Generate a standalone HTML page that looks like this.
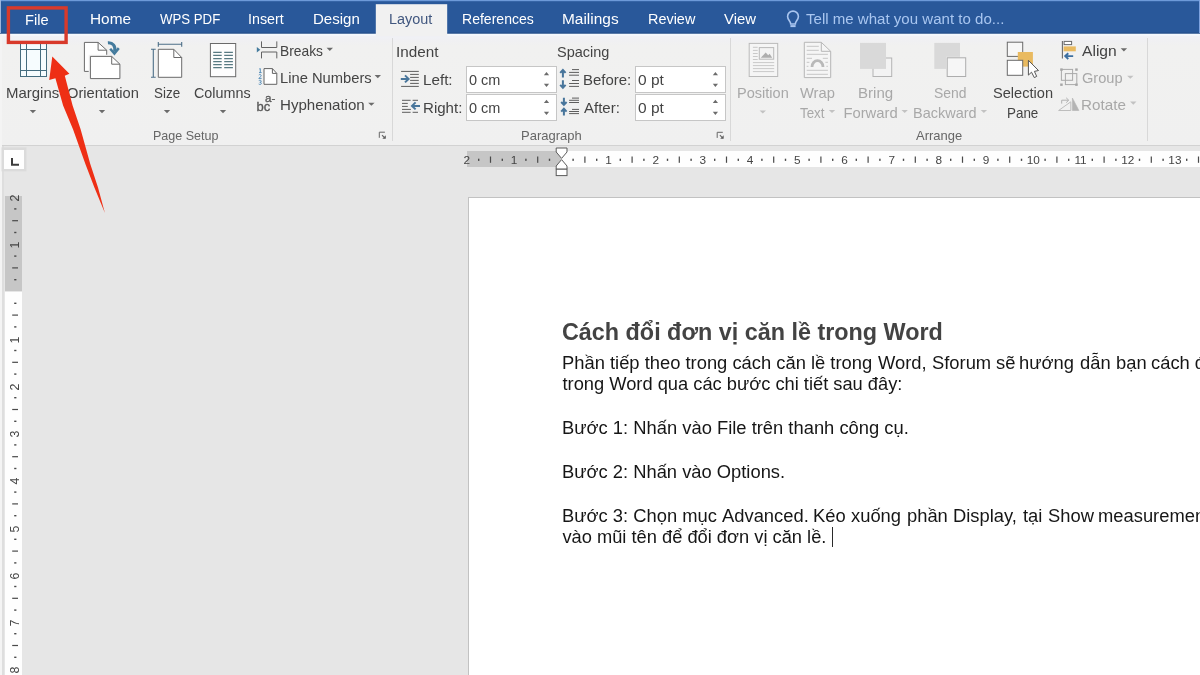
<!DOCTYPE html>
<html lang="vi">
<head>
<meta charset="utf-8">
<title>Word - Layout</title>
<style>
html,body{margin:0;padding:0;}
body{width:1200px;height:675px;overflow:hidden;position:relative;background:#e6e6e6;font-family:"Liberation Sans",sans-serif;}
#app{position:absolute;left:0;top:0;width:1200px;height:675px;overflow:hidden;}
.abs{position:absolute;}
#tabstext,#ribbontext,#doctext,#hruler,#vruler{position:absolute;left:0;top:0;will-change:transform;}
.t{position:absolute;white-space:pre;transform-origin:0 0;font-family:"Liberation Sans",sans-serif;}
.rl{position:absolute;}
.rn{position:absolute;width:20px;height:14px;line-height:14px;text-align:center;font-size:11.8px;color:#454545;font-family:"Liberation Sans",sans-serif;}
.rv{transform:rotate(-90deg);transform-origin:50% 50%;}
#tabbar{position:absolute;left:0;top:0;width:1200px;height:34px;}
#tab-active{position:absolute;left:0;top:0;}
#ribbon{position:absolute;left:0;top:33px;width:1200px;height:113px;background:linear-gradient(#f4f8fd 0,#f4f8fd 2px,#f0f1f6 3.5px,#f0f0f3 7px,#f1f1f0 13px,#f0f0f0 100%);}
#ribbon-border{position:absolute;left:0;top:145.2px;width:1200px;height:1.3px;background:#d2d2d2;}
.sep{position:absolute;top:37.5px;width:1.2px;height:103.5px;background:#d8d8d8;}
.inp{position:absolute;background:#fff;border:1px solid #c6c6c6;box-sizing:border-box;}
#docarea{position:absolute;left:0;top:146.5px;width:1200px;height:529px;background:#e6e6e6;}
#leftedge{position:absolute;left:0;top:33.5px;width:1.6px;height:642px;background:#f4f4f4;}
#leftedge-tab{position:absolute;left:0;top:0;width:1.2px;height:33.4px;background:#9db5dc;}
#rightedge-tab{position:absolute;left:1198.9px;top:0;width:1.1px;height:33.4px;background:#7da2df;}
#leftline{position:absolute;left:1.6px;top:146px;width:2.2px;height:530px;background:#dedede;}
#page{position:absolute;left:468px;top:197px;width:740px;height:480px;background:#fff;border:1px solid #c2c2c2;box-sizing:border-box;}
#caret{position:absolute;left:832px;top:527px;width:1px;height:20px;background:#2a2a2a;}
svg{position:absolute;left:0;top:0;overflow:visible;}
</style>
</head>
<body>
<div id="app">
  <div id="docarea"></div>
  <div id="leftline"></div>
  <div id="hruler">
<div class="rl" style="left:466.7px;top:151.3px;width:94.6px;height:15.4px;background:#c6c6c6"></div>
<div class="rl" style="left:561.3px;top:151.3px;width:638.7px;height:15.4px;background:#fefefe"></div>
<span class="rn" style="left:456.90px;top:152.6px">2</span>
<span class="rn" style="left:504.10px;top:152.6px">1</span>
<span class="rn" style="left:598.50px;top:152.6px">1</span>
<span class="rn" style="left:645.70px;top:152.6px">2</span>
<span class="rn" style="left:692.90px;top:152.6px">3</span>
<span class="rn" style="left:740.10px;top:152.6px">4</span>
<span class="rn" style="left:787.30px;top:152.6px">5</span>
<span class="rn" style="left:834.50px;top:152.6px">6</span>
<span class="rn" style="left:881.70px;top:152.6px">7</span>
<span class="rn" style="left:928.90px;top:152.6px">8</span>
<span class="rn" style="left:976.10px;top:152.6px">9</span>
<span class="rn" style="left:1023.30px;top:152.6px">10</span>
<span class="rn" style="left:1070.50px;top:152.6px">11</span>
<span class="rn" style="left:1117.70px;top:152.6px">12</span>
<span class="rn" style="left:1164.90px;top:152.6px">13</span>
<svg width="1200" height="675" viewBox="0 0 1200 675"><g fill="#4a4a4a"><rect x="478.00" y="158.7" width="1.4" height="2.2"/><rect x="489.90" y="156.5" width="1.2" height="6.3"/><rect x="501.60" y="158.7" width="1.4" height="2.2"/><rect x="525.20" y="158.7" width="1.4" height="2.2"/><rect x="537.10" y="156.5" width="1.2" height="6.3"/><rect x="548.80" y="158.7" width="1.4" height="2.2"/><rect x="572.40" y="158.7" width="1.4" height="2.2"/><rect x="584.30" y="156.5" width="1.2" height="6.3"/><rect x="596.00" y="158.7" width="1.4" height="2.2"/><rect x="619.60" y="158.7" width="1.4" height="2.2"/><rect x="631.50" y="156.5" width="1.2" height="6.3"/><rect x="643.20" y="158.7" width="1.4" height="2.2"/><rect x="666.80" y="158.7" width="1.4" height="2.2"/><rect x="678.70" y="156.5" width="1.2" height="6.3"/><rect x="690.40" y="158.7" width="1.4" height="2.2"/><rect x="714.00" y="158.7" width="1.4" height="2.2"/><rect x="725.90" y="156.5" width="1.2" height="6.3"/><rect x="737.60" y="158.7" width="1.4" height="2.2"/><rect x="761.20" y="158.7" width="1.4" height="2.2"/><rect x="773.10" y="156.5" width="1.2" height="6.3"/><rect x="784.80" y="158.7" width="1.4" height="2.2"/><rect x="808.40" y="158.7" width="1.4" height="2.2"/><rect x="820.30" y="156.5" width="1.2" height="6.3"/><rect x="832.00" y="158.7" width="1.4" height="2.2"/><rect x="855.60" y="158.7" width="1.4" height="2.2"/><rect x="867.50" y="156.5" width="1.2" height="6.3"/><rect x="879.20" y="158.7" width="1.4" height="2.2"/><rect x="902.80" y="158.7" width="1.4" height="2.2"/><rect x="914.70" y="156.5" width="1.2" height="6.3"/><rect x="926.40" y="158.7" width="1.4" height="2.2"/><rect x="950.00" y="158.7" width="1.4" height="2.2"/><rect x="961.90" y="156.5" width="1.2" height="6.3"/><rect x="973.60" y="158.7" width="1.4" height="2.2"/><rect x="997.20" y="158.7" width="1.4" height="2.2"/><rect x="1009.10" y="156.5" width="1.2" height="6.3"/><rect x="1020.80" y="158.7" width="1.4" height="2.2"/><rect x="1044.40" y="158.7" width="1.4" height="2.2"/><rect x="1056.30" y="156.5" width="1.2" height="6.3"/><rect x="1068.00" y="158.7" width="1.4" height="2.2"/><rect x="1091.60" y="158.7" width="1.4" height="2.2"/><rect x="1103.50" y="156.5" width="1.2" height="6.3"/><rect x="1115.20" y="158.7" width="1.4" height="2.2"/><rect x="1138.80" y="158.7" width="1.4" height="2.2"/><rect x="1150.70" y="156.5" width="1.2" height="6.3"/><rect x="1162.40" y="158.7" width="1.4" height="2.2"/><rect x="1186.00" y="158.7" width="1.4" height="2.2"/><rect x="1197.90" y="156.5" width="1.2" height="6.3"/></g></svg>
  </div>
  <div id="vruler">
<div class="rl" style="left:5px;top:195.7px;width:16.9px;height:95.8px;background:#c6c6c6"></div>
<div class="rl" style="left:5px;top:291.5px;width:16.9px;height:383.5px;background:#fefefe"></div>
<span class="rn rv" style="left:4.9px;top:191.10px;font-size:12.4px">2</span>
<span class="rn rv" style="left:4.9px;top:238.30px;font-size:12.4px">1</span>
<span class="rn rv" style="left:4.9px;top:332.70px;font-size:12.4px">1</span>
<span class="rn rv" style="left:4.9px;top:379.90px;font-size:12.4px">2</span>
<span class="rn rv" style="left:4.9px;top:427.10px;font-size:12.4px">3</span>
<span class="rn rv" style="left:4.9px;top:474.30px;font-size:12.4px">4</span>
<span class="rn rv" style="left:4.9px;top:521.50px;font-size:12.4px">5</span>
<span class="rn rv" style="left:4.9px;top:568.70px;font-size:12.4px">6</span>
<span class="rn rv" style="left:4.9px;top:615.90px;font-size:12.4px">7</span>
<span class="rn rv" style="left:4.9px;top:663.10px;font-size:12.4px">8</span>
<svg width="1200" height="675" viewBox="0 0 1200 675"><g fill="#4a4a4a"><rect x="14.2" y="208.20" width="2.2" height="1.4"/><rect x="12.2" y="220.10" width="5.8" height="1.2"/><rect x="14.2" y="231.80" width="2.2" height="1.4"/><rect x="14.2" y="255.40" width="2.2" height="1.4"/><rect x="12.2" y="267.30" width="5.8" height="1.2"/><rect x="14.2" y="279.00" width="2.2" height="1.4"/><rect x="14.2" y="302.60" width="2.2" height="1.4"/><rect x="12.2" y="314.50" width="5.8" height="1.2"/><rect x="14.2" y="326.20" width="2.2" height="1.4"/><rect x="14.2" y="349.80" width="2.2" height="1.4"/><rect x="12.2" y="361.70" width="5.8" height="1.2"/><rect x="14.2" y="373.40" width="2.2" height="1.4"/><rect x="14.2" y="397.00" width="2.2" height="1.4"/><rect x="12.2" y="408.90" width="5.8" height="1.2"/><rect x="14.2" y="420.60" width="2.2" height="1.4"/><rect x="14.2" y="444.20" width="2.2" height="1.4"/><rect x="12.2" y="456.10" width="5.8" height="1.2"/><rect x="14.2" y="467.80" width="2.2" height="1.4"/><rect x="14.2" y="491.40" width="2.2" height="1.4"/><rect x="12.2" y="503.30" width="5.8" height="1.2"/><rect x="14.2" y="515.00" width="2.2" height="1.4"/><rect x="14.2" y="538.60" width="2.2" height="1.4"/><rect x="12.2" y="550.50" width="5.8" height="1.2"/><rect x="14.2" y="562.20" width="2.2" height="1.4"/><rect x="14.2" y="585.80" width="2.2" height="1.4"/><rect x="12.2" y="597.70" width="5.8" height="1.2"/><rect x="14.2" y="609.40" width="2.2" height="1.4"/><rect x="14.2" y="633.00" width="2.2" height="1.4"/><rect x="12.2" y="644.90" width="5.8" height="1.2"/><rect x="14.2" y="656.60" width="2.2" height="1.4"/><rect x="14.2" y="680.20" width="2.2" height="1.4"/></g></svg>
  </div>
  <div id="page"></div>
  <div id="doctext">
<span class="t" style="left:562.40px;top:321.00px;font-size:23.3px;line-height:23.3px;color:#434343;transform:scaleX(1.0026);font-weight:bold;">Cách đổi đơn vị căn lề trong Word</span>
<span class="t" style="left:562.00px;top:354.00px;font-size:18.3px;line-height:18.3px;color:#161616;transform:scaleX(1.0040);">Phần tiếp theo trong cách căn lề trong</span>
<span class="t" style="left:877.50px;top:354.00px;font-size:18.3px;line-height:18.3px;color:#161616;transform:scaleX(1.0040);">Word,</span>
<span class="t" style="left:931.70px;top:354.00px;font-size:18.3px;line-height:18.3px;color:#161616;transform:scaleX(1.0040);">Sforum</span>
<span class="t" style="left:995.80px;top:354.00px;font-size:18.3px;line-height:18.3px;color:#161616;transform:scaleX(1.0040);">sẽ</span>
<span class="t" style="left:1019.00px;top:354.00px;font-size:18.3px;line-height:18.3px;color:#161616;transform:scaleX(1.0040);">hướng</span>
<span class="t" style="left:1080.00px;top:354.00px;font-size:18.3px;line-height:18.3px;color:#161616;transform:scaleX(1.0040);">dẫn</span>
<span class="t" style="left:1115.70px;top:354.00px;font-size:18.3px;line-height:18.3px;color:#161616;transform:scaleX(1.0040);">bạn</span>
<span class="t" style="left:1150.80px;top:354.00px;font-size:18.3px;line-height:18.3px;color:#161616;transform:scaleX(1.0040);">cách đổi đơn vị</span>
<span class="t" style="left:562.50px;top:375.00px;font-size:18.3px;line-height:18.3px;color:#161616;">trong Word qua các bước chi tiết sau đây:</span>
<span class="t" style="left:561.80px;top:419.00px;font-size:18.3px;line-height:18.3px;color:#161616;transform:scaleX(1.0042);">Bước 1: Nhấn vào File trên thanh công cụ.</span>
<span class="t" style="left:561.50px;top:463.00px;font-size:18.3px;line-height:18.3px;color:#161616;transform:scaleX(1.0032);">Bước 2: Nhấn vào Options.</span>
<span class="t" style="left:561.60px;top:507.00px;font-size:18.3px;line-height:18.3px;color:#161616;transform:scaleX(1.0040);">Bước 3: Chọn mục</span>
<span class="t" style="left:722.00px;top:507.00px;font-size:18.3px;line-height:18.3px;color:#161616;transform:scaleX(1.0040);">Advanced.</span>
<span class="t" style="left:813.20px;top:507.00px;font-size:18.3px;line-height:18.3px;color:#161616;transform:scaleX(1.0040);">Kéo</span>
<span class="t" style="left:850.80px;top:507.00px;font-size:18.3px;line-height:18.3px;color:#161616;transform:scaleX(1.0040);">xuống</span>
<span class="t" style="left:906.50px;top:507.00px;font-size:18.3px;line-height:18.3px;color:#161616;transform:scaleX(1.0040);">phần</span>
<span class="t" style="left:953.00px;top:507.00px;font-size:18.3px;line-height:18.3px;color:#161616;transform:scaleX(1.0040);">Display,</span>
<span class="t" style="left:1023.20px;top:507.00px;font-size:18.3px;line-height:18.3px;color:#161616;transform:scaleX(1.0040);">tại</span>
<span class="t" style="left:1048.30px;top:507.00px;font-size:18.3px;line-height:18.3px;color:#161616;transform:scaleX(1.0040);">Show</span>
<span class="t" style="left:1098.30px;top:507.00px;font-size:18.3px;line-height:18.3px;color:#161616;transform:scaleX(1.0040);">measurement units in, nhấn</span>
<span class="t" style="left:562.40px;top:528.00px;font-size:18.3px;line-height:18.3px;color:#161616;">vào mũi tên để đổi đơn vị căn lề.</span>
  </div>
  <div id="caret"></div>
  <div id="ribbon"></div>
  <div id="ribbon-border"></div>
  <div class="sep" style="left:392px"></div>
  <div class="sep" style="left:730px"></div>
  <div class="sep" style="left:1147.2px"></div>
  <div class="inp" style="left:466px;top:66px;width:91px;height:27px"></div>
  <div class="inp" style="left:466px;top:94px;width:91px;height:27px"></div>
  <div class="inp" style="left:635px;top:66px;width:91px;height:27px"></div>
  <div class="inp" style="left:635px;top:94px;width:91px;height:27px"></div>
  <div id="tabbar"><svg width="1200" height="34" viewBox="0 0 1200 34"><rect x="0" y="0" width="1200" height="33.5" fill="#29589a"/><rect x="0" y="32.6" width="1200" height="0.9" fill="#244c86"/><rect x="0" y="0" width="1200" height="1.2" fill="#6d9ad9"/></svg></div>
  <svg id="tab-active" width="1200" height="40" viewBox="0 0 1200 40"><rect x="375.8" y="4.2" width="71.4" height="32" fill="#f1f1f1"/></svg>
  <div id="leftedge"></div>
  <div id="leftedge-tab"></div>
  <div id="rightedge-tab"></div>
  <div id="tabstext">
<span class="t" style="left:24.94px;top:12.00px;font-size:15.2px;line-height:15.2px;color:#ffffff;transform:scaleX(0.9641);">File</span>
<span class="t" style="left:89.79px;top:11.00px;font-size:15.2px;line-height:15.2px;color:#ffffff;transform:scaleX(1.0137);">Home</span>
<span class="t" style="left:160.00px;top:11.00px;font-size:15.2px;line-height:15.2px;color:#ffffff;transform:scaleX(0.8707);">WPS PDF</span>
<span class="t" style="left:248.36px;top:11.00px;font-size:15.2px;line-height:15.2px;color:#ffffff;transform:scaleX(0.9400);">Insert</span>
<span class="t" style="left:313.11px;top:11.00px;font-size:15.2px;line-height:15.2px;color:#ffffff;transform:scaleX(0.9906);">Design</span>
<span class="t" style="left:388.75px;top:11.00px;font-size:15.2px;line-height:15.2px;color:#41577f;transform:scaleX(0.9498);">Layout</span>
<span class="t" style="left:461.57px;top:11.00px;font-size:15.2px;line-height:15.2px;color:#ffffff;transform:scaleX(0.9251);">References</span>
<span class="t" style="left:561.98px;top:11.00px;font-size:15.2px;line-height:15.2px;color:#ffffff;transform:scaleX(1.0161);">Mailings</span>
<span class="t" style="left:647.65px;top:11.00px;font-size:15.2px;line-height:15.2px;color:#ffffff;transform:scaleX(0.9503);">Review</span>
<span class="t" style="left:724.00px;top:11.00px;font-size:15.2px;line-height:15.2px;color:#ffffff;transform:scaleX(0.9793);">View</span>
<span class="t" style="left:806.20px;top:11.00px;font-size:15.2px;line-height:15.2px;color:#a9c6f0;transform:scaleX(0.9912);">Tell me what you want to do...</span>
  </div>
  <div id="ribbontext">
<span class="t" style="left:5.69px;top:86.00px;font-size:14.8px;line-height:14.8px;color:#444444;transform:scaleX(1.0112);">Margins</span>
<span class="t" style="left:67.40px;top:86.00px;font-size:14.8px;line-height:14.8px;color:#444444;transform:scaleX(0.9924);">Orientation</span>
<span class="t" style="left:153.70px;top:86.00px;font-size:14.8px;line-height:14.8px;color:#444444;transform:scaleX(0.9070);">Size</span>
<span class="t" style="left:194.40px;top:86.00px;font-size:14.8px;line-height:14.8px;color:#444444;transform:scaleX(0.9709);">Columns</span>
<span class="t" style="left:279.77px;top:44.00px;font-size:14.8px;line-height:14.8px;color:#444444;transform:scaleX(0.9338);">Breaks</span>
<span class="t" style="left:279.70px;top:71.00px;font-size:14.8px;line-height:14.8px;color:#444444;transform:scaleX(0.9954);">Line Numbers</span>
<span class="t" style="left:279.68px;top:98.00px;font-size:14.8px;line-height:14.8px;color:#444444;transform:scaleX(1.0201);">Hyphenation</span>
<span class="t" style="left:152.80px;top:130.00px;font-size:12.6px;line-height:12.6px;color:#666666;transform:scaleX(0.9951);">Page Setup</span>
<span class="t" style="left:396.27px;top:45.00px;font-size:14.8px;line-height:14.8px;color:#444444;transform:scaleX(1.0318);">Indent</span>
<span class="t" style="left:422.67px;top:73.00px;font-size:14.8px;line-height:14.8px;color:#444444;transform:scaleX(1.0270);">Left:</span>
<span class="t" style="left:422.68px;top:101.00px;font-size:14.8px;line-height:14.8px;color:#444444;transform:scaleX(1.0180);">Right:</span>
<span class="t" style="left:469.40px;top:73.00px;font-size:14.8px;line-height:14.8px;color:#444444;transform:scaleX(0.9799);">0 cm</span>
<span class="t" style="left:469.40px;top:101.00px;font-size:14.8px;line-height:14.8px;color:#444444;transform:scaleX(0.9799);">0 cm</span>
<span class="t" style="left:557.30px;top:45.00px;font-size:14.8px;line-height:14.8px;color:#444444;transform:scaleX(0.9804);">Spacing</span>
<span class="t" style="left:582.69px;top:73.00px;font-size:14.8px;line-height:14.8px;color:#444444;transform:scaleX(1.0111);">Before:</span>
<span class="t" style="left:583.70px;top:101.00px;font-size:14.8px;line-height:14.8px;color:#444444;transform:scaleX(1.0132);">After:</span>
<span class="t" style="left:638.30px;top:73.00px;font-size:14.8px;line-height:14.8px;color:#444444;transform:scaleX(1.0460);">0 pt</span>
<span class="t" style="left:638.30px;top:101.00px;font-size:14.8px;line-height:14.8px;color:#444444;transform:scaleX(1.0460);">0 pt</span>
<span class="t" style="left:520.67px;top:130.00px;font-size:12.6px;line-height:12.6px;color:#666666;transform:scaleX(1.0310);">Paragraph</span>
<span class="t" style="left:736.72px;top:86.00px;font-size:14.8px;line-height:14.8px;color:#a8a8a8;transform:scaleX(0.9823);">Position</span>
<span class="t" style="left:799.60px;top:86.00px;font-size:14.8px;line-height:14.8px;color:#a8a8a8;transform:scaleX(0.9927);">Wrap</span>
<span class="t" style="left:799.60px;top:106.00px;font-size:14.8px;line-height:14.8px;color:#a8a8a8;transform:scaleX(0.9028);">Text</span>
<span class="t" style="left:858.38px;top:86.00px;font-size:14.8px;line-height:14.8px;color:#a8a8a8;transform:scaleX(1.0176);">Bring</span>
<span class="t" style="left:843.40px;top:106.00px;font-size:14.8px;line-height:14.8px;color:#a8a8a8;">Forward</span>
<span class="t" style="left:934.20px;top:86.00px;font-size:14.8px;line-height:14.8px;color:#a8a8a8;transform:scaleX(0.9409);">Send</span>
<span class="t" style="left:912.92px;top:106.00px;font-size:14.8px;line-height:14.8px;color:#a8a8a8;transform:scaleX(0.9790);">Backward</span>
<span class="t" style="left:992.60px;top:86.00px;font-size:14.8px;line-height:14.8px;color:#444444;transform:scaleX(0.9861);">Selection</span>
<span class="t" style="left:1006.59px;top:106.00px;font-size:14.8px;line-height:14.8px;color:#444444;transform:scaleX(0.9061);">Pane</span>
<span class="t" style="left:1082.30px;top:44.00px;font-size:14.8px;line-height:14.8px;color:#444444;transform:scaleX(1.0559);">Align</span>
<span class="t" style="left:1082.30px;top:71.00px;font-size:14.8px;line-height:14.8px;color:#a8a8a8;transform:scaleX(0.9879);">Group</span>
<span class="t" style="left:1081.27px;top:98.00px;font-size:14.8px;line-height:14.8px;color:#a8a8a8;transform:scaleX(1.0291);">Rotate</span>
<span class="t" style="left:915.50px;top:130.00px;font-size:12.6px;line-height:12.6px;color:#666666;transform:scaleX(1.0290);">Arrange</span>
  </div>
<svg id="icons" width="1200" height="675" viewBox="0 0 1200 675">
<defs>
  <path id="dd" d="M-3.2,-0.9 L3.2,-0.9 L0,2.2 Z"/>
  <path id="up" d="M-2.6,1.5 L2.6,1.5 L0,-1.7 Z"/>
  <path id="dn" d="M-2.6,-1.5 L2.6,-1.5 L0,1.7 Z"/>
  <g id="launch"><path d="M0,5.6 V0 H5.6" fill="none" stroke="#666" stroke-width="1"/><path d="M2.7,2.9 L5.6,5.8" fill="none" stroke="#666" stroke-width="1.1"/><path d="M6.5,3 V6.5 H3 Z" fill="#5e5e5e"/></g>
</defs>
<!-- dropdown arrows -->
<g fill="#6b6b6b">
  <use href="#dd" x="32.9" y="111"/><use href="#dd" x="102" y="111"/><use href="#dd" x="167" y="111"/><use href="#dd" x="223" y="111"/>
  <use href="#dd" x="329.8" y="48.7"/><use href="#dd" x="377.8" y="76"/><use href="#dd" x="371.4" y="103.6"/>
  <use href="#dd" x="1123.9" y="49.2"/>
</g>
<g fill="#c2c2c2">
  <use href="#dd" x="762.8" y="111.3"/><use href="#dd" x="832" y="110.8"/><use href="#dd" x="904.7" y="110.8"/><use href="#dd" x="983.9" y="110.8"/>
  <use href="#dd" x="1130.3" y="76.6"/><use href="#dd" x="1133.3" y="102.5"/>
</g>
<!-- spinners -->
<g fill="#6b6b6b">
  <use href="#up" x="546.5" y="73.8"/><use href="#dn" x="546.5" y="85.2"/>
  <use href="#up" x="546.5" y="101.5"/><use href="#dn" x="546.5" y="113.2"/>
  <use href="#up" x="715.4" y="73.8"/><use href="#dn" x="715.4" y="85.2"/>
  <use href="#up" x="715.4" y="101.5"/><use href="#dn" x="715.4" y="113.2"/>
</g>
<use href="#launch" x="379.3" y="132.2"/>
<use href="#launch" x="717.2" y="132.3"/>

<!-- Margins -->
<g id="ic-margins" stroke="#456c7e" stroke-width="1" fill="none">
  <rect x="20.5" y="42.5" width="26" height="34" fill="#f6fcfe"/>
  <path d="M26.5,42.5 V76.5 M40.5,42.5 V76.5 M20.5,49.5 H46.5 M20.5,70.5 H46.5"/>
</g>
<!-- Orientation -->
<g id="ic-orient" stroke="#6a6a6a" stroke-width="1" fill="#fff">
  <path d="M84.4,42.4 H98.1 L106.7,50.2 V71.4 H84.4 Z"/>
  <path d="M98.1,42.4 V50.2 H106.7" fill="none"/>
  <path d="M90.4,56.4 H111.7 L119.9,64.2 V78.6 H90.4 Z" stroke="#f1f1f1" stroke-width="3.4"/>
  <path d="M90.4,56.4 H111.7 L119.9,64.2 V78.6 H90.4 Z"/>
  <path d="M111.7,56.4 V64.2 H119.9" fill="none"/>
  <path d="M107.9,42.8 C112.8,42.4 115.6,45.8 114.8,51.6" fill="none" stroke="#447b9d" stroke-width="3.2"/>
  <path d="M110.2,48.7 L114.4,53.6 L118.8,48.1" fill="none" stroke="#447b9d" stroke-width="2.5"/>
</g>
<!-- Size -->
<g id="ic-size" stroke="#6a6a6a" stroke-width="1" fill="#fff">
  <path d="M158.3,49.3 H173.8 L181.7,57.5 V77.3 H158.3 Z"/>
  <path d="M173.8,49.3 V57.5 H181.7" fill="none"/>
  <path d="M158.3,44.3 H181.7 M158.3,42 V46.7 M181.7,42 V46.7 M153.3,49.3 V77.3 M151,49.3 H155.7 M151,77.3 H155.7" stroke="#4d6f88" stroke-width="1.1" fill="none"/>
</g>
<!-- Columns -->
<g id="ic-cols" stroke="#6a6a6a" stroke-width="1" fill="#fdfdfd">
  <rect x="210.4" y="43.5" width="25.3" height="33.2"/>
  <path d="M213.2,52.4 H221.7 M224.2,52.4 H232.9 M213.2,55.4 H221.7 M224.2,55.4 H232.9 M213.2,58.5 H221.7 M224.2,58.5 H232.9 M213.2,61.5 H221.7 M224.2,61.5 H232.9 M213.2,64.5 H221.7 M224.2,64.5 H232.9 M213.2,67.5 H221.7 M224.2,67.5 H232.9" stroke="#587a82" stroke-width="1.25"/>
</g>
<!-- Breaks -->
<g id="ic-breaks" stroke="#636363" stroke-width="1" fill="none">
  <path d="M261.5,41.4 V47.5 H276.8 V41.4"/>
  <path d="M261.5,58.4 V52 H276.8 V58.4"/>
  <path d="M256.8,47 L260.3,49.7 L256.8,52.4 Z" fill="#447b9d" stroke="none"/>
</g>
<!-- Line numbers -->
<g id="ic-linenum" stroke="#636363" stroke-width="1" fill="#fff">
  <path d="M264,68.6 H272.4 L276.8,73.4 V84.3 H264 Z"/>
  <path d="M272.4,68.6 V73.4 H276.8" fill="none"/>
  <g stroke="#4a86b4" stroke-width="0.9" fill="none">
    <path d="M259.2,69 L260.3,68.6 V72.6 M259,72.6 H261.6"/>
    <path d="M258.8,75 C259.6,74.2 261.4,74.4 261.2,75.8 C261,76.8 259.4,77.4 258.8,78.4 H261.6"/>
    <path d="M258.8,80.6 C259.8,80 261.4,80.2 261.2,81.4 C261.1,82.1 260.4,82.3 259.8,82.3 C260.6,82.3 261.5,82.6 261.4,83.5 C261.2,84.6 259.4,84.6 258.7,84"/>
  </g>
</g>
<!-- Hyphenation -->
<g id="ic-hyph" font-family="Liberation Sans, sans-serif" fill="#585858" stroke="#585858" stroke-width="0.35">
  <text x="256.6" y="111.3" font-size="13">bc</text>
  <text x="265" y="102" font-size="11.6">a-</text>
</g>

<!-- Indent left icon -->
<g id="ic-indl" stroke="#5d5d5d" stroke-width="1" fill="none">
  <path d="M401.1,71.4 H418.8 M410.1,74.4 H418.8 M410.1,77.4 H418.8 M410.1,80.4 H418.8 M410.1,83.4 H418.8 M401.1,86.4 H418.8"/>
  <path d="M400.8,78.9 H408 M405,75.4 L408.6,78.9 L405,82.4" stroke="#48759b" stroke-width="2"/>
</g>
<g id="ic-indr" stroke="#5d5d5d" stroke-width="1" fill="none">
  <path d="M402,100.3 H410.6 M412.6,100.3 H418 M402,103.4 H407.8 M402,106.4 H407.8 M402,109.4 H410.9 M402,112.3 H410.6 M412.6,112.3 H418" />
  <path d="M420,105.9 H412.6 M415.6,102.4 L412,105.9 L415.6,109.4" stroke="#48759b" stroke-width="2"/>
</g>
<!-- Spacing before -->
<g id="ic-spb" stroke="#5d5d5d" stroke-width="1" fill="none">
  <path d="M572,69.6 H579 M569.1,72.4 H579 M569.1,75.2 H579 M572,80.5 H579 M569.1,83.5 H579 M569.1,86.4 H579"/>
  <path d="M562.9,70.2 V77.4 M560.2,72.9 L562.9,70 L565.6,72.9 M562.9,80.2 V87.6 M560.2,84.9 L562.9,87.8 L565.6,84.9" stroke="#48759b" stroke-width="2"/>
</g>
<g id="ic-spa" stroke="#5d5d5d" stroke-width="1" fill="none">
  <path d="M572,98.1 H579 M569.1,100.3 H579 M569.1,102.5 H579 M572,109.4 H579 M569.1,111.5 H579 M569.1,113.6 H579"/>
  <path d="M563.9,97.8 V104.6 M561.2,102 L563.9,104.9 L566.6,102 M563.9,115.6 V109 M561.2,111.6 L563.9,108.7 L566.6,111.6" stroke="#48759b" stroke-width="2"/>
</g>

<!-- Position -->
<g id="ic-pos" stroke="#bababa" stroke-width="1" fill="none">
  <rect x="749.2" y="43.4" width="28.5" height="33.1" fill="#f5f5f5"/>
  <rect x="759.3" y="47.6" width="14.4" height="11.6" fill="#f3f3f3"/>
  <path d="M760.8,57.8 L765.7,52.4 L768.2,55.2 L769.6,53.8 L772.2,57.8 Z" fill="#adadad" stroke="none"/>
  <path d="M752.9,47.3 H757.7 M752.9,50.4 H757.7 M752.9,53.5 H757.7 M752.9,56.5 H757.7 M752.9,59.5 H757.7 M752.9,62.6 H774.2 M752.9,65.6 H774.2 M752.9,68.6 H774.2 M752.9,71.6 H774.2" stroke="#c9c9c9"/>
</g>
<!-- Wrap text -->
<g id="ic-wrap" stroke="#b6b6b6" stroke-width="1" fill="none">
  <path d="M804.3,42.3 H821.3 L830.7,51.3 V77.6 H804.3 Z" fill="#f5f5f5"/>
  <path d="M821.3,42.3 V51.3 H830.7"/>
  <path d="M806.7,46.3 H818.8 M806.7,50.3 H818.8 M806.7,54.3 H827.9 M806.7,58.3 H812 M822.8,58.3 H827.9 M806.7,62.3 H809.4 M825.4,62.3 H827.9 M806.7,66.3 H808.4 M826.4,66.3 H827.9 M806.7,70.3 H827.9 M806.7,74.3 H827.9" stroke="#c6c6c6"/>
  <path d="M812,66.9 A5.5,6.2 0 0 1 823,66.9" stroke="#b9b9b9" stroke-width="2.8"/>
</g>
<!-- Bring forward -->
<g id="ic-bring">
  <rect x="873" y="58" width="18.7" height="18.5" fill="#f3f3f3" stroke="#b4b4b4"/>
  <rect x="860" y="42.9" width="26" height="26" fill="#d9d9d9"/>
</g>
<!-- Send backward -->
<g id="ic-send">
  <rect x="934.3" y="42.9" width="25.7" height="26" fill="#d9d9d9"/>
  <rect x="946.2" y="56.8" width="20.5" height="20.7" fill="#f0f0f0"/><rect x="947.2" y="57.8" width="18.5" height="18.7" fill="#f6f6f6" stroke="#adadad"/>
</g>
<!-- Selection pane -->
<g id="ic-sel" stroke="#6a6a6a" stroke-width="1">
  <rect x="1007.3" y="42.2" width="15.4" height="14.2" fill="#f7f7f7"/>
  <rect x="1017.8" y="52" width="15.1" height="14.6" fill="#e9ba60" stroke="none"/>
  <rect x="1007.3" y="60.3" width="15.4" height="15" fill="#fff"/>
  <path d="M1028.4,60.3 V75.1 L1031.5,72.2 L1034.3,77.6 L1036.7,76.4 L1034.4,71.4 L1038.5,70.5 Z" fill="#fff" stroke="#555" stroke-width="1"/>
</g>
<!-- Align -->
<g id="ic-align">
  <path d="M1062.4,41 V58.6" stroke="#6a6a6a" stroke-width="1.1"/>
  <rect x="1064.1" y="41.4" width="7.5" height="3.2" fill="#fff" stroke="#6a6a6a" stroke-width="1"/>
  <rect x="1063.6" y="46.4" width="12.2" height="4.9" fill="#e9ba60"/>
  <path d="M1073.2,56.1 H1065.6 M1068.3,53.2 L1065.2,56.1 L1068.3,59" stroke="#3d6fa0" stroke-width="1.9" fill="none"/>
</g>
<!-- Group -->
<g id="ic-group" stroke="#a9a9a9" fill="none" stroke-width="1">
  <rect x="1061.4" y="69.4" width="11.2" height="10.9"/>
  <rect x="1065.4" y="73.6" width="11.4" height="11"/>
  <g fill="#a6a6a6" stroke="none"><rect x="1060.2" y="68.4" width="2.5" height="2.4"/><rect x="1075.2" y="68.4" width="2.5" height="2.4"/><rect x="1060.2" y="83.5" width="2.5" height="2.4"/><rect x="1075.2" y="83.5" width="2.5" height="2.4"/></g>
</g>
<!-- Rotate -->
<g id="ic-rotate" stroke="#bdbdbd" fill="none" stroke-width="1">
  <path d="M1058.6,110.5 H1070.8 V101.8 Z" />
  <path d="M1072.4,98 V110.5 H1078.9 Z" fill="#b4b4b4" stroke="#b4b4b4" stroke-width="0.6"/>
  <path d="M1061.7,103.6 V100.2 H1068.4 M1066.2,97.8 L1068.7,100.2 L1066.2,102.6" stroke="#b0b0b0"/>
</g>

<!-- bulb -->
<g id="ic-bulb" stroke="#a9c5ef" fill="none" stroke-width="1.6">
  <path d="M790.7,24 C790.7,21.4 787.6,20 787.6,16.5 A5.4,5.4 0 0 1 798.4,16.5 C798.4,20 795.3,21.4 795.3,24 Z"/>
  <rect x="790.4" y="25.1" width="5.2" height="2" fill="#a9c5ef" stroke="none"/>
</g>

<!-- L tab selector -->
<g id="tabsel"><rect x="1.5" y="147.4" width="25" height="24" fill="#dbdbdb"/><rect x="4" y="150" width="20" height="19" fill="#fefefe"/><path d="M12,157.9 V164.7 H19" fill="none" stroke="#3c3c3c" stroke-width="2"/></g>

<!-- ruler markers -->
<g id="markers" stroke="#5a5a5a" stroke-width="1" fill="#fff">
  <path d="M556.2,148 H567 V152 L561.6,158.4 L556.2,152 Z"/>
  <path d="M561.6,159.6 L567,166 V169.2 H556.2 V166 Z"/>
  <rect x="556.2" y="169.2" width="10.8" height="6.4"/>
</g>

<!-- annotation: red box + arrow -->
<g id="annot">
  <rect x="8.4" y="7.9" width="57.7" height="34.5" fill="none" stroke="#d83a2b" stroke-width="3.4"/>
  <path d="M52.3,56.6 L69.4,73.7 L64.8,75.8 L72.6,105.6 L80.6,129.3 L90.2,163.7 L98,187.4 L104.9,213 L94.4,187.4 L85.3,163.7 L73,129.3 L63.1,105.6 L55.4,78.2 L49.2,79.9 Z" fill="#ee2f15"/>
</g>
</svg>

</div>
</body>
</html>
